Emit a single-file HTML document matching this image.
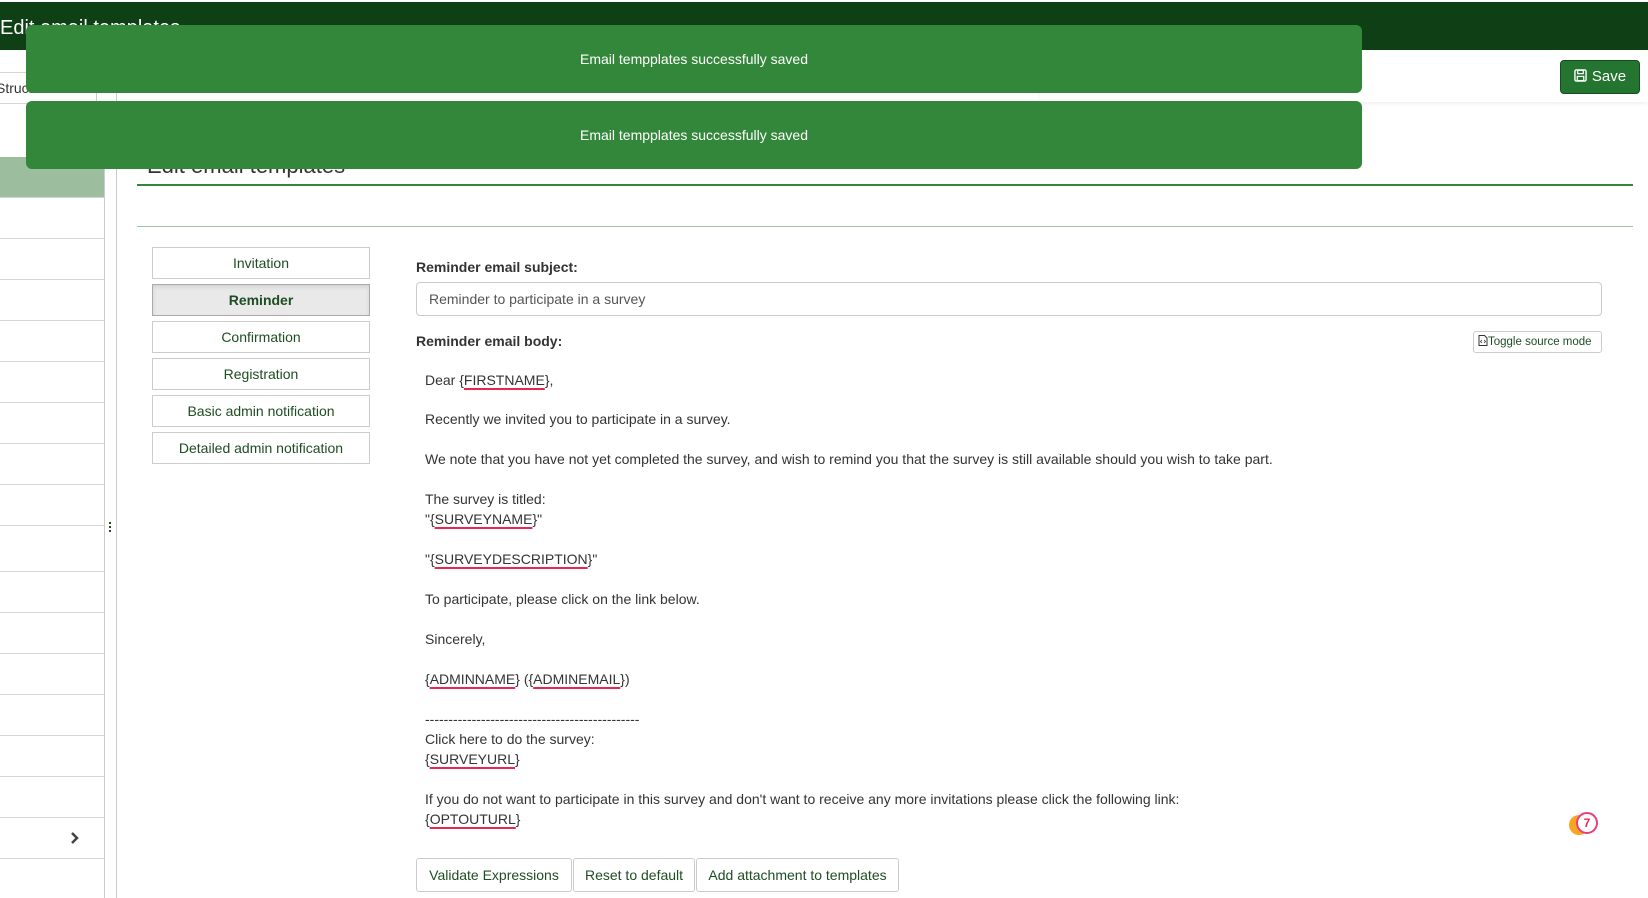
<!DOCTYPE html>
<html><head><style>
*{margin:0;padding:0;box-sizing:border-box}
body{width:1648px;height:898px;overflow:hidden;background:#fff;font-family:"Liberation Sans",Arial,sans-serif;font-size:14px;color:#333;position:relative}
.abs{position:absolute}
.top{left:0;top:2px;width:1648px;height:48px;background:#0f3f15}
.toast{left:26px;width:1336px;height:68px;background:#33873a;border-radius:6px;color:#fff;text-align:center;line-height:68px;font-size:14px}
.hl{height:1px;background:#d6d6d6}
.tab{left:152px;width:218px;height:32px;border:1px solid #ccc;text-align:center;line-height:30px;color:#1e4d22;background:#fff}
.body p{position:absolute;left:425px;color:#333;font-size:14px;white-space:nowrap}
.u{text-decoration:underline;text-decoration-color:#e8264e;text-decoration-thickness:2px;text-underline-offset:3px}
.btn{top:858px;height:34px;border:1px solid #ccc;border-radius:3px;text-align:center;line-height:32px;color:#1e4d22;font-size:14px;background:#fff}
</style></head><body>
<div class="abs top"></div>
<div class="abs" style="left:0;top:17px;color:#fff;font-size:20px">Edit email templates</div>
<!-- second row -->
<div class="abs hl" style="left:0;top:72px;width:96px"></div>
<div class="abs" style="left:-4px;top:80px;font-size:14px;color:#333">Structure</div>
<div class="abs hl" style="left:0;top:103px;width:104px"></div>
<div class="abs" style="left:96px;top:50px;width:1px;height:53px;background:#ccc"></div>
<div class="abs" style="left:1040px;top:50px;width:608px;height:52px;box-shadow:0 2px 4px rgba(0,0,0,.06)"></div>
<div class="abs" style="left:1560px;top:60px;width:80px;height:34px;background:#237530;border:1px solid #174d20;border-radius:4px;color:#fff;font-size:15px;line-height:32px;text-align:center">
<svg width="13" height="13" viewBox="0 0 14 14" style="vertical-align:-1px;margin-right:5px"><rect x="1" y="1" width="12" height="12" rx="1.5" fill="none" stroke="#fff" stroke-width="1.5"/><rect x="4" y="1.5" width="6" height="3.5" fill="none" stroke="#fff" stroke-width="1.3"/><rect x="3.5" y="8" width="7" height="4.5" fill="none" stroke="#fff" stroke-width="1.3"/></svg>Save</div>
<!-- sidebar -->
<div class="abs" style="left:104px;top:102px;width:1px;height:796px;background:#ccc"></div>
<div class="abs" style="left:116px;top:92px;width:1px;height:806px;background:#ccc"></div>
<div class="abs" style="left:0;top:157px;width:104px;height:40px;background:#9dbd9f"></div>
<div class="abs hl" style="left:0;top:197px;width:104px"></div>
<div class="abs hl" style="left:0;top:238px;width:104px"></div>
<div class="abs hl" style="left:0;top:279px;width:104px"></div>
<div class="abs hl" style="left:0;top:320px;width:104px"></div>
<div class="abs hl" style="left:0;top:361px;width:104px"></div>
<div class="abs hl" style="left:0;top:402px;width:104px"></div>
<div class="abs hl" style="left:0;top:443px;width:104px"></div>
<div class="abs hl" style="left:0;top:484px;width:104px"></div>
<div class="abs hl" style="left:0;top:525px;width:104px"></div>
<div class="abs hl" style="left:0;top:571px;width:104px"></div>
<div class="abs hl" style="left:0;top:612px;width:104px"></div>
<div class="abs hl" style="left:0;top:653px;width:104px"></div>
<div class="abs hl" style="left:0;top:694px;width:104px"></div>
<div class="abs hl" style="left:0;top:735px;width:104px"></div>
<div class="abs hl" style="left:0;top:776px;width:104px"></div>
<div class="abs hl" style="left:0;top:817px;width:104px"></div>
<div class="abs hl" style="left:0;top:858px;width:104px"></div>
<svg class="abs" style="left:70px;top:831px" width="10" height="14" viewBox="0 0 10 14"><path d="M2 2l5 5-5 5" fill="none" stroke="#444" stroke-width="2.5"/></svg>
<div class="abs" style="left:109px;top:522px;width:2px;height:10px;border-left:2px dotted #1e4d22"></div>
<!-- content header -->
<div class="abs" style="left:147px;top:153px;font-size:22px;color:#333">Edit email templates</div>
<div class="abs" style="left:137px;top:184px;width:1496px;height:2px;background:#33873a"></div>
<div class="abs" style="left:137px;top:226px;width:1496px;height:1px;background:#9dc49f"></div>
<!-- tabs -->
<div class="abs tab" style="top:247px">Invitation</div>
<div class="abs tab" style="top:284px;background:#e9e9e9;border-color:#aaa;font-weight:bold;box-shadow:inset 0 2px 4px rgba(0,0,0,.1)">Reminder</div>
<div class="abs tab" style="top:321px">Confirmation</div>
<div class="abs tab" style="top:358px">Registration</div>
<div class="abs tab" style="top:395px">Basic admin notification</div>
<div class="abs tab" style="top:432px">Detailed admin notification</div>
<!-- form -->
<div class="abs" style="left:416px;top:259px;font-weight:bold;color:#333">Reminder email subject:</div>
<div class="abs" style="left:416px;top:282px;width:1186px;height:34px;border:1px solid #ccc;border-radius:4px;padding-left:12px;line-height:32px;color:#555">Reminder to participate in a survey</div>
<div class="abs" style="left:416px;top:333px;font-weight:bold;color:#333">Reminder email body:</div>
<div class="abs" style="left:1473px;top:331px;width:129px;height:22px;border:1px solid #ccc;border-radius:3px;font-size:11.5px;line-height:20px;color:#1e4d22;padding-left:4px;white-space:nowrap"><svg width="10" height="11" viewBox="0 0 10 11" style="vertical-align:-1px"><path d="M1 .5h5.5l2.5 2.5v7.5H1z" fill="none" stroke="#333"/><path d="M4 5l-1.5 1.5L4 8M6 5l1.5 1.5L6 8" fill="none" stroke="#333" stroke-width=".8"/></svg>Toggle source mode</div>
<div class="body">
<p style="top:372px">Dear {<span class="u">FIRSTNAME</span>},</p>
<p style="top:411px">Recently we invited you to participate in a survey.</p>
<p style="top:451px">We note that you have not yet completed the survey, and wish to remind you that the survey is still available should you wish to take part.</p>
<p style="top:491px">The survey is titled:</p>
<p style="top:511px">"{<span class="u">SURVEYNAME</span>}"</p>
<p style="top:551px">"{<span class="u">SURVEYDESCRIPTION</span>}"</p>
<p style="top:591px">To participate, please click on the link below.</p>
<p style="top:631px">Sincerely,</p>
<p style="top:671px">{<span class="u">ADMINNAME</span>} ({<span class="u">ADMINEMAIL</span>})</p>
<p style="top:711px">----------------------------------------------</p>
<p style="top:731px">Click here to do the survey:</p>
<p style="top:751px">{<span class="u">SURVEYURL</span>}</p>
<p style="top:791px">If you do not want to participate in this survey and don't want to receive any more invitations please click the following link:</p>
<p style="top:811px">{<span class="u">OPTOUTURL</span>}</p>
</div>
<div class="abs btn" style="left:416px;width:156px">Validate Expressions</div>
<div class="abs btn" style="left:573px;width:122px">Reset to default</div>
<div class="abs btn" style="left:696px;width:203px">Add attachment to templates</div>
<!-- badge -->
<div class="abs" style="left:1569px;top:815px;width:20px;height:20px;border-radius:50%;background:#f5a623"></div>
<div class="abs" style="left:1576px;top:812px;width:22px;height:22px;border-radius:50%;background:#fff;border:2px solid #ee3d76;color:#e8264e;font-weight:bold;font-size:12px;text-align:center;line-height:18px">7</div>
<!-- toasts -->
<div class="abs toast" style="top:25px">Email tempplates successfully saved</div>
<div class="abs toast" style="top:101px">Email tempplates successfully saved</div>
</body></html>
